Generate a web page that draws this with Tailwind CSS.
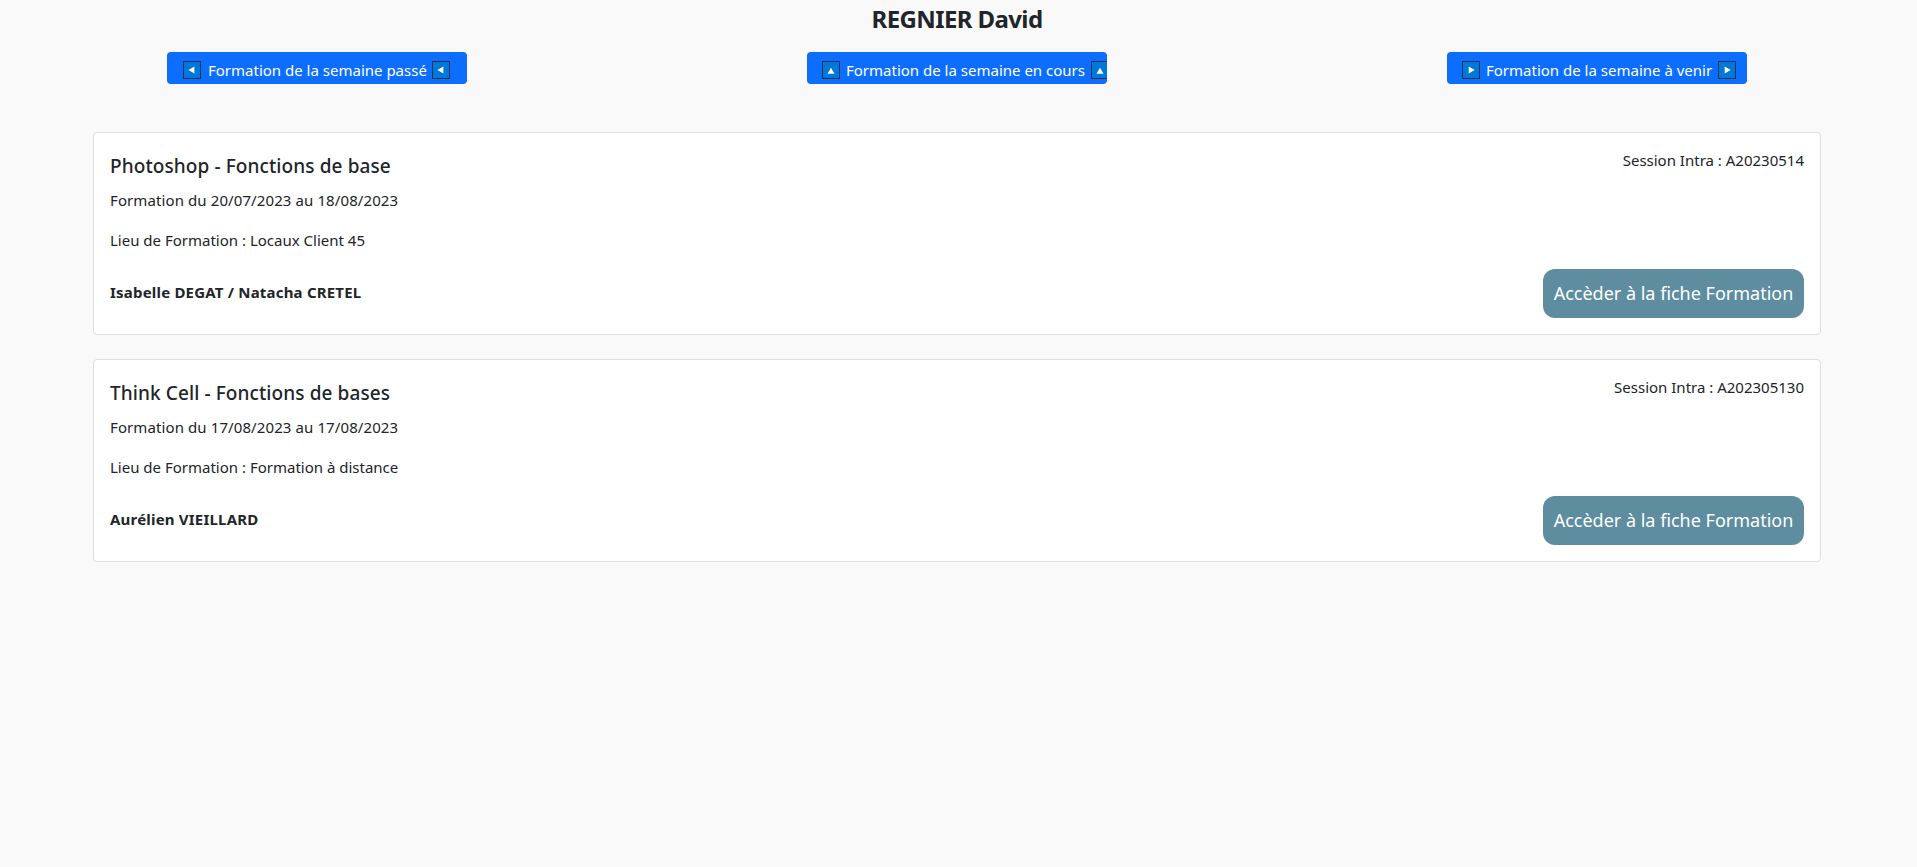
<!DOCTYPE html>
<html lang="fr">
<head>
  <meta charset="UTF-8" />
  <title>Formations</title>
  <script src="https://cdn.jsdelivr.net/npm/@tailwindcss/browser@4"></script>
</head>
<body class="min-h-screen bg-[#f9f9f9] text-[#212529] font-['Noto_Sans',sans-serif]">
  <div class="w-[1914px]">
    <h1 class="h-[36px] text-center text-[24px] leading-[38px] font-bold tracking-[-0.6px]">REGNIER David</h1>

    <!-- week buttons -->
    <div class="mt-[16px] ml-[167px] w-[1580px] flex justify-between">
      <a class="w-[300px] h-[32px] bg-[#0d6efd] rounded text-white text-[15px] flex items-center pl-[16px] pt-[4px] overflow-hidden whitespace-nowrap">
        <span class="w-[18px] h-[18px] shrink-0 bg-[#0078d7] border border-[#1f3157] flex items-center justify-center"><svg width="8" height="8" viewBox="0 0 8 8"><path d="M6.4 0.5V7.5L0.4 4Z" fill="#fff"/></svg></span>
        <span class="ml-[7px]">Formation de la semaine passé</span>
        <span class="ml-[5px] w-[18px] h-[18px] shrink-0 bg-[#0078d7] border border-[#1f3157] flex items-center justify-center"><svg width="8" height="8" viewBox="0 0 8 8"><path d="M6.4 0.5V7.5L0.4 4Z" fill="#fff"/></svg></span>
      </a>
      <a class="w-[300px] h-[32px] bg-[#0d6efd] rounded text-white text-[15px] flex items-center pl-[15px] pt-[4px] overflow-hidden whitespace-nowrap">
        <span class="w-[18px] h-[18px] shrink-0 bg-[#0078d7] border border-[#1f3157] flex items-center justify-center"><svg width="8" height="8" viewBox="0 0 8 8"><path d="M4 1.7L7.5 7.7H0.5Z" fill="#fff"/></svg></span>
        <span class="ml-[6px]">Formation de la semaine en cours</span>
        <span class="ml-[6px] w-[18px] h-[18px] shrink-0 bg-[#0078d7] border border-[#1f3157] flex items-center justify-center"><svg width="8" height="8" viewBox="0 0 8 8"><path d="M4 1.7L7.5 7.7H0.5Z" fill="#fff"/></svg></span>
      </a>
      <a class="w-[300px] h-[32px] bg-[#0d6efd] rounded text-white text-[15px] flex items-center pl-[15px] pt-[4px] overflow-hidden whitespace-nowrap">
        <span class="w-[18px] h-[18px] shrink-0 bg-[#0078d7] border border-[#1f3157] flex items-center justify-center"><svg width="8" height="8" viewBox="0 0 8 8"><path d="M1.7 0.5V7.5L7.7 4Z" fill="#fff"/></svg></span>
        <span class="ml-[6px]">Formation de la semaine à venir</span>
        <span class="ml-[6px] w-[18px] h-[18px] shrink-0 bg-[#0078d7] border border-[#1f3157] flex items-center justify-center"><svg width="8" height="8" viewBox="0 0 8 8"><path d="M1.7 0.5V7.5L7.7 4Z" fill="#fff"/></svg></span>
      </a>
    </div>

    <!-- formations -->
    <div class="mt-[48px] ml-[93px] w-[1728px] flex flex-col gap-[24px]">
      <div class="h-[203px] bg-white border border-[#dfdfdf] rounded px-[16px] flex justify-between">
        <div class="flex flex-col">
          <h5 class="mt-[19px] text-[19px] leading-[28px] font-medium tracking-[0.1px]">Photoshop - Fonctions de base</h5>
          <p class="mt-[10px] text-[15px] leading-[21px] tracking-[0.1px]">Formation du 20/07/2023 au 18/08/2023</p>
          <p class="mt-[19px] text-[15px] leading-[21px]">Lieu de Formation : Locaux Client 45</p>
          <p class="mt-[31px] text-[15px] leading-[21px] font-bold tracking-[0.2px]">Isabelle DEGAT / Natacha CRETEL</p>
        </div>
        <div class="flex flex-col items-end">
          <p class="mt-[17px] text-[15px] leading-[21px]">Session Intra : A20230514</p>
          <a class="mt-[98px] w-[261px] h-[49px] rounded-[12px] bg-[#5e8d9f] text-white text-[18px] flex items-center justify-center whitespace-nowrap">Accèder à la fiche Formation</a>
        </div>
      </div>

      <div class="h-[203px] bg-white border border-[#dfdfdf] rounded px-[16px] flex justify-between">
        <div class="flex flex-col">
          <h5 class="mt-[19px] text-[19px] leading-[28px] font-medium tracking-[0.1px]">Think Cell - Fonctions de bases</h5>
          <p class="mt-[10px] text-[15px] leading-[21px] tracking-[0.1px]">Formation du 17/08/2023 au 17/08/2023</p>
          <p class="mt-[19px] text-[15px] leading-[21px]">Lieu de Formation : Formation à distance</p>
          <p class="mt-[31px] text-[15px] leading-[21px] font-bold tracking-[0.2px]">Aurélien VIEILLARD</p>
        </div>
        <div class="flex flex-col items-end">
          <p class="mt-[17px] text-[15px] leading-[21px]">Session Intra : A202305130</p>
          <a class="mt-[98px] w-[261px] h-[49px] rounded-[12px] bg-[#5e8d9f] text-white text-[18px] flex items-center justify-center whitespace-nowrap">Accèder à la fiche Formation</a>
        </div>
      </div>
    </div>
  </div>
</body>
</html>
